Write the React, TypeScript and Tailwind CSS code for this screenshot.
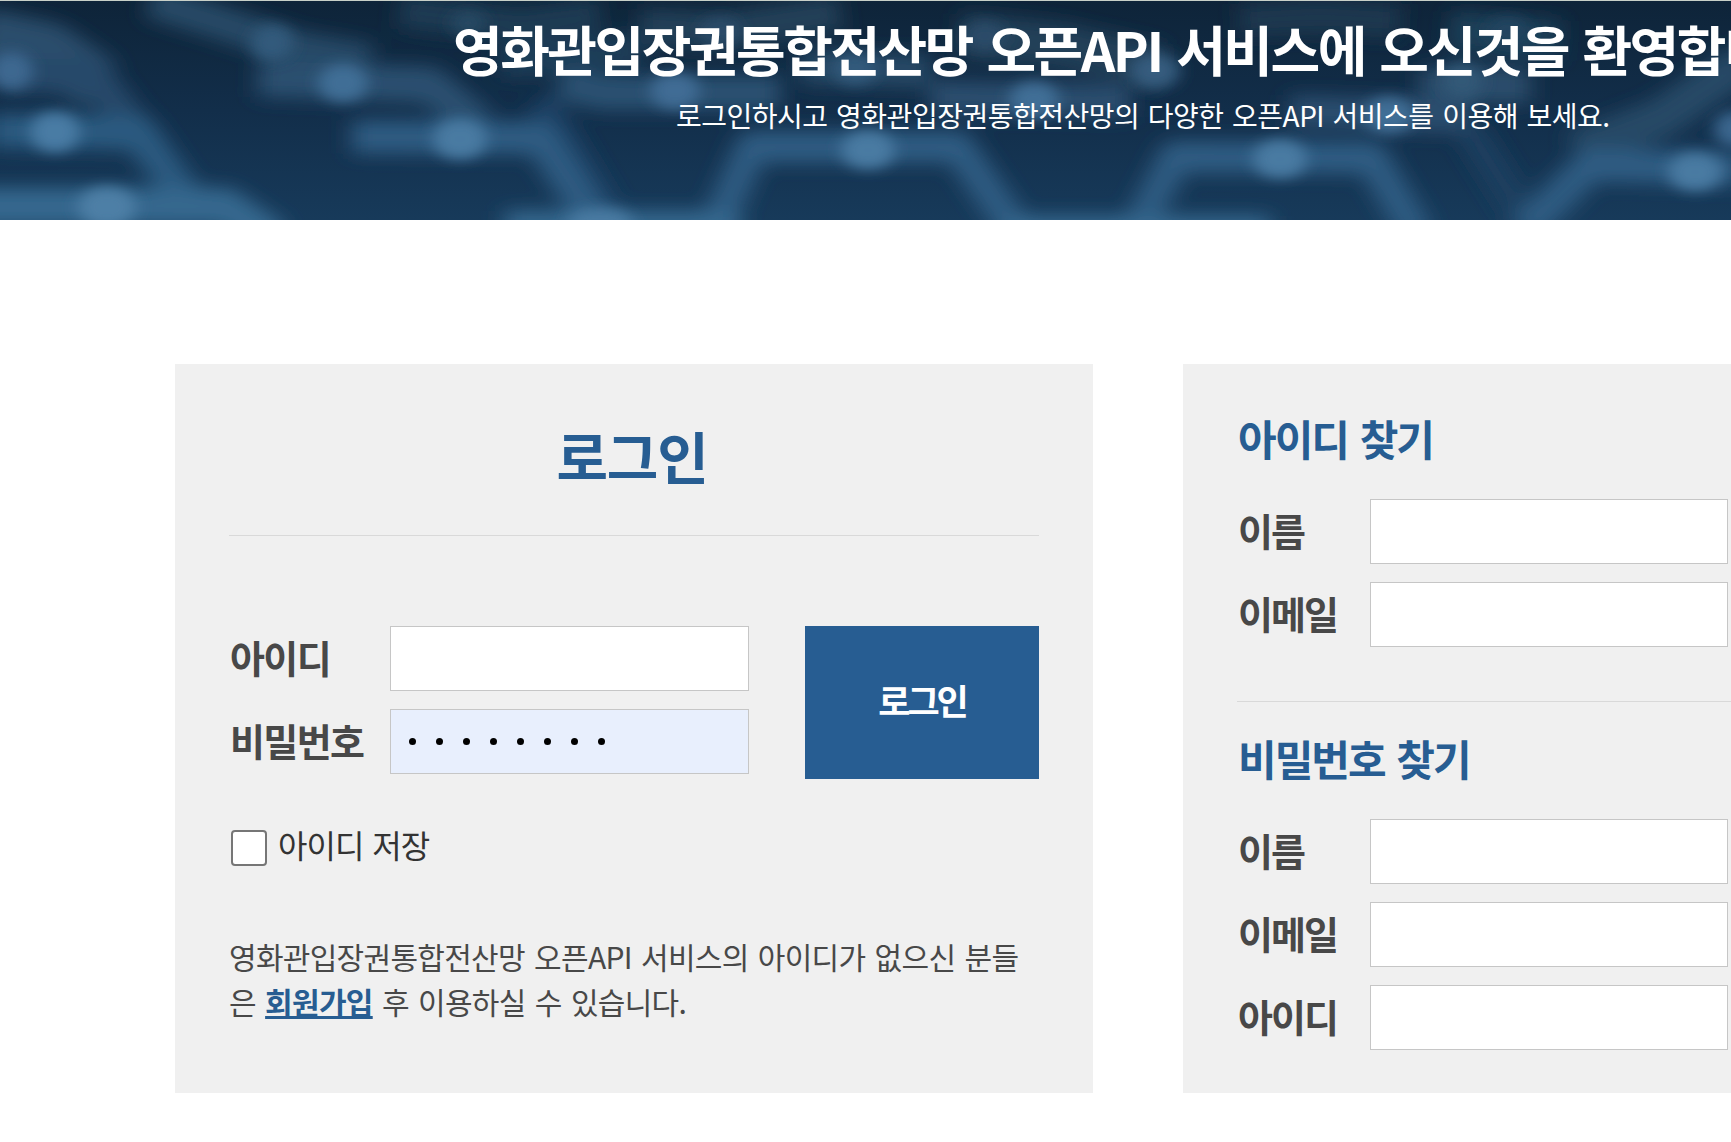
import React from "react";

interface Glow {
  x: number;
  y: number;
  rx: number;
  ry: number;
  color: string;
}

interface Trace {
  d: string;
  color: string;
  width: number;
}

interface FieldProps {
  id: string;
  label: string;
}

const traces: Trace[] = [
  // far rows
  { d: "M-20 35 L50 50 L100 85", color: "#2b4d6c", width: 56 },
  { d: "M150 0 L215 20 L300 48 L370 60", color: "#284a66", width: 34 },
  { d: "M400 10 L520 24 L600 14", color: "#1d3b53", width: 34 },
  { d: "M500 60 L640 50", color: "#1d3d59", width: 34 },
  { d: "M640 26 L720 30 L840 12", color: "#203f58", width: 36 },
  { d: "M960 34 L1060 44 L1160 66", color: "#223f58", width: 44 },
  { d: "M1240 20 L1320 16 L1400 20", color: "#1c384f", width: 34 },
  { d: "M1450 30 L1560 40", color: "#1f3f59", width: 40 },
  { d: "M1420 85 L1530 85", color: "#2b4d6c", width: 36 },
  { d: "M800 66 L930 70", color: "#264866", width: 34 },
  // middle row
  { d: "M0 74 L95 76 L200 215", color: "#264a6a", width: 34 },
  { d: "M258 78 L430 84 L480 125", color: "#2c5070", width: 36 },
  { d: "M560 82 L600 92 L780 92", color: "#2c5172", width: 34 },
  { d: "M540 100 L610 219", color: "#1f4266", width: 30 },
  { d: "M930 96 L1130 100", color: "#2a4d6e", width: 32 },
  { d: "M1290 110 L1470 116", color: "#2a4d6e", width: 32 },
  { d: "M1470 130 L1530 225", color: "#1c3f60", width: 28 },
  { d: "M1575 150 L1660 118 L1745 60", color: "#254866", width: 40 },
  // near row
  { d: "M-10 130 L140 132 L200 219", color: "#2c5a80", width: 34 },
  { d: "M352 136 L540 137 L598 225", color: "#2f5c82", width: 33 },
  { d: "M716 225 L752 146 L958 146 L1016 230", color: "#2f5c82", width: 32 },
  { d: "M1134 235 L1175 156 L1372 157 L1418 235", color: "#2f5c82", width: 32 },
  { d: "M1524 230 L1590 164 L1740 168", color: "#2f5c82", width: 33 },
  { d: "M-30 206 L225 206 L275 240", color: "#35678e", width: 38 },
  { d: "M505 224 L740 224", color: "#35678e", width: 28 },
  { d: "M1005 229 L1270 229", color: "#35678e", width: 28 },
];

const glows: Glow[] = [
  { x: 11, y: 70, rx: 25, ry: 21, color: "#3c6890" },
  { x: 55, y: 131, rx: 28, ry: 22, color: "#4a7ca4" },
  { x: 107, y: 206, rx: 32, ry: 22, color: "#4d7fa6" },
  { x: 272, y: 42, rx: 24, ry: 20, color: "#335a7b" },
  { x: 343, y: 82, rx: 28, ry: 21, color: "#406e96" },
  { x: 468, y: 22, rx: 20, ry: 14, color: "#284a63" },
  { x: 460, y: 138, rx: 30, ry: 22, color: "#487aa2" },
  { x: 600, y: 222, rx: 36, ry: 16, color: "#487aa2" },
  { x: 675, y: 90, rx: 28, ry: 20, color: "#3f6c94" },
  { x: 720, y: 30, rx: 24, ry: 16, color: "#2a4c69" },
  { x: 855, y: 68, rx: 25, ry: 18, color: "#325a7c" },
  { x: 868, y: 149, rx: 30, ry: 21, color: "#487aa2" },
  { x: 985, y: 35, rx: 24, ry: 16, color: "#2a4c69" },
  { x: 1034, y: 99, rx: 28, ry: 20, color: "#406e96" },
  { x: 1155, y: 70, rx: 28, ry: 20, color: "#345b7e" },
  { x: 1280, y: 158, rx: 30, ry: 21, color: "#487aa2" },
  { x: 1389, y: 114, rx: 28, ry: 20, color: "#406e96" },
  { x: 1462, y: 80, rx: 23, ry: 20, color: "#315877" },
  { x: 1508, y: 30, rx: 24, ry: 16, color: "#234561" },
  { x: 1695, y: 171, rx: 30, ry: 21, color: "#487aa2" },
  { x: 1735, y: 128, rx: 24, ry: 20, color: "#3a668e" },
];

const HeroBackdrop: React.FC = () => (
  <svg
    className="absolute inset-0 h-full w-full"
    viewBox="0 0 1731 219"
    preserveAspectRatio="none"
    aria-hidden="true"
  >
    <defs>
      <linearGradient id="base" x1="0" y1="0" x2="0" y2="1">
        <stop offset="0" stopColor="#0e2439" />
        <stop offset="0.5" stopColor="#122e4a" />
        <stop offset="1" stopColor="#173a5a" />
      </linearGradient>
      <filter id="trace-blur" x="-5%" y="-30%" width="110%" height="160%">
        <feGaussianBlur stdDeviation="11 9" />
      </filter>
      <filter id="glow-blur" x="-5%" y="-30%" width="110%" height="160%">
        <feGaussianBlur stdDeviation="8 6.5" />
      </filter>
    </defs>
    <rect width="1731" height="219" fill="url(#base)" />
    <g filter="url(#trace-blur)" fill="none" strokeLinejoin="round">
      {traces.map((trace) => (
        <path key={trace.d} d={trace.d} stroke={trace.color} strokeWidth={trace.width} />
      ))}
    </g>
    <g filter="url(#glow-blur)">
      {glows.map((glow) => (
        <ellipse key={`${glow.x}-${glow.y}`} cx={glow.x} cy={glow.y} rx={glow.rx - 3} ry={glow.ry - 2} fill={glow.color} />
      ))}
    </g>
  </svg>
);

const Hero: React.FC = () => (
  <header className="relative h-[220px] overflow-hidden border-t border-[#c8d0c8] text-white">
    <HeroBackdrop />
    <div className="relative whitespace-nowrap">
      <h1 className="pt-[9px] pl-[453px] text-[54px] leading-[78px] font-bold tracking-[-2.5px] [word-spacing:1.8px]">
        영화관입장권통합전산망 오픈API 서비스에 오신것을 환영합니다.
      </h1>
      <p className="pt-[7px] pl-[676px] text-[28px] leading-[40px] tracking-[-0.5px] [word-spacing:1.2px]">
        로그인하시고 영화관입장권통합전산망의 다양한 오픈API 서비스를 이용해 보세요.
      </p>
    </div>
  </header>
);

const FindField: React.FC<FieldProps> = ({ id, label }) => (
  <div className="flex h-[65px] items-center">
    <label htmlFor={id} className="w-[133px] shrink-0 pb-1 pl-px text-[38px] font-bold tracking-[-2px]">
      {label}
    </label>
    <input id={id} type="text" className="h-full w-[358px] border border-[#c6c6c6] bg-white px-4" />
  </div>
);

const LoginPanel: React.FC = () => (
  <section className="h-[729px] w-[918px] shrink-0 bg-[#f0f0f0] px-[54px]">
    <h2 className="h-[172px] border-b border-[#d9d9d9] pt-[50px] pr-1 text-center text-[56px] leading-[82px] font-bold tracking-[-1.2px] text-[#275d92]">
      로그인
    </h2>
    <form className="pt-[90px]">
      <div className="flex items-start">
        <div className="flex w-[520px] flex-col gap-[18px]">
          <div className="flex h-[65px] items-center">
            <label htmlFor="login-id" className="w-[161px] shrink-0 pb-1 pl-px text-[38px] font-bold tracking-[-1.6px]">
              아이디
            </label>
            <input id="login-id" type="text" className="h-full w-[359px] border border-[#c6c6c6] bg-white px-4" />
          </div>
          <div className="flex h-[65px] items-center">
            <span className="w-[161px] shrink-0 pb-1 pl-px text-[38px] font-bold tracking-[-1.6px]">비밀번호</span>
            <div className="flex h-full w-[359px] items-center gap-5 border border-[#c6c6c6] bg-[#e8effd] pl-[18px]">
              {Array.from({ length: 8 }, (_, i) => (
                <span key={i} className="size-[7px] rounded-full bg-black" />
              ))}
            </div>
          </div>
        </div>
        <button
          type="button"
          className="ml-14 h-[153px] w-[234px] bg-[#275d92] pb-1 text-[35px] font-bold tracking-[-3px] text-white"
        >
          로그인
        </button>
      </div>

      <label className="mt-[51px] flex h-9 items-center text-[#333]">
        <input
          type="checkbox"
          className="ml-[2px] size-9 appearance-none rounded-[4px] border-2 border-[#767676] bg-white"
        />
        <span className="ml-[11px] pb-2 text-[32px] leading-9 tracking-[-1px] [word-spacing:1px]">아이디 저장</span>
      </label>
    </form>
    <p className="mt-[68px] text-[30px] leading-[45px] tracking-[-0.7px] whitespace-nowrap [word-spacing:1.5px]">
      영화관입장권통합전산망 오픈API 서비스의 아이디가 없으신 분들
      <br />은{" "}
      <a href="#join" className="font-bold text-[#275d92] underline">
        회원가입
      </a>{" "}
      후 이용하실 수 있습니다.
    </p>
  </section>
);

const FindPanel: React.FC = () => (
  <section className="h-[729px] w-[918px] shrink-0 bg-[#f0f0f0] px-[54px]">
    <div className="h-[338px] border-b border-[#d9d9d9] pt-[44px]">
      <h3 className="mb-[31px] pl-px text-[42px] leading-[60px] font-bold tracking-[-2px] text-[#275d92] [word-spacing:2px]">
        아이디 찾기
      </h3>
      <div className="flex flex-col gap-[18px]">
        <FindField id="find-id-name" label="이름" />
        <FindField id="find-id-email" label="이메일" />
      </div>
    </div>
    <div className="pt-[26px]">
      <h3 className="mb-[31px] pl-px text-[42px] leading-[60px] font-bold tracking-[-2px] text-[#275d92] [word-spacing:2px]">
        비밀번호 찾기
      </h3>
      <div className="flex flex-col gap-[18px]">
        <FindField id="find-pw-name" label="이름" />
        <FindField id="find-pw-email" label="이메일" />
        <FindField id="find-pw-id" label="아이디" />
      </div>
    </div>
  </section>
);

export const App: React.FC = () => {
  return (
    <div
      lang="ko"
      className="h-[1142px] w-full overflow-hidden bg-white font-['Noto_Sans_CJK_KR',sans-serif] text-[#484848]"
    >
      <Hero />
      <main className="flex gap-[90px] pt-36 pl-[175px]">
        <LoginPanel />
        <FindPanel />
      </main>
    </div>
  );
};

export default App;
